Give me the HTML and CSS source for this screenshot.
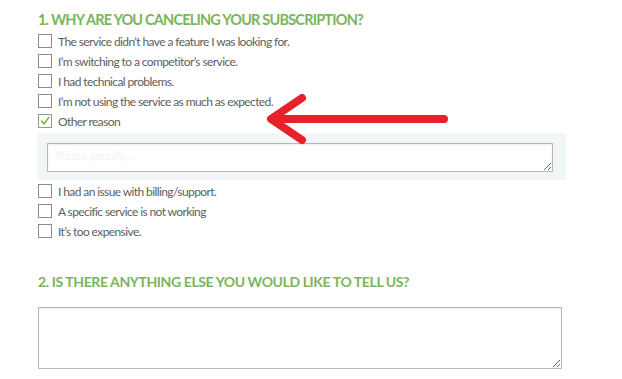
FILE: index.html
```html
<!DOCTYPE html>
<html lang="en">
<head>
    <meta charset="UTF-8">
    <meta name="viewport" content="width=device-width, initial-scale=1.0">
    <title>Cancel subscription</title>
    <link rel="stylesheet" href="styles.css">
</head>
<body>
    <div class="survey">
        <section class="question">
            <h2 class="question-title">1. Why are you canceling your subscription?</h2>
            <ul class="options">
                <li class="option"><span class="box"></span>The service didn’t have a feature I was looking for.</li>
                <li class="option"><span class="box"></span>I’m switching to a competitor’s service.</li>
                <li class="option"><span class="box"></span>I had technical problems.</li>
                <li class="option"><span class="box"></span>I’m not using the service as much as expected.</li>
                <li class="option">
                    <span class="box checked">
                        <svg viewBox="0 0 14 14" width="14" height="14"><path d="M3 7.2 L5.8 10.2 L11.5 2.8" fill="none" stroke="#6cb33f" stroke-width="1.8" stroke-linecap="round" stroke-linejoin="round"/></svg>
                    </span>Other reason
                </li>
            </ul>
            <div class="other-box">
                <textarea class="other-input" placeholder="Please specify..."></textarea>
            </div>
            <ul class="options">
                <li class="option"><span class="box"></span>I had an issue with billing/support.</li>
                <li class="option"><span class="box"></span>A specific service is not working</li>
                <li class="option"><span class="box"></span>It’s too expensive.</li>
            </ul>
        </section>

        <section class="question second">
            <h2 class="question-title small">2. Is there anything else you would like to tell us?</h2>
            <textarea class="comments"></textarea>
        </section>

        <!-- annotation arrow -->
        <svg class="arrow" viewBox="260 88 195 62" width="195" height="62">
            <path d="M272 119 L444 119 M302 98 L271 119 L302 140" fill="none" stroke="#e8202a" stroke-width="8" stroke-linecap="round" stroke-linejoin="round"/>
        </svg>
    </div>
</body>
</html>
```

FILE: styles.css
```css
body {
    margin: 0;
    background: #fff;
    font-family: Lato, 'Open Sans', sans-serif;
    color: #606060;
}

.survey {
    position: relative;
    width: 622px;
    height: 379px;
    padding: 11px 0 0 38px;
    box-sizing: border-box;
}

.question-title {
    margin: 0;
    font-size: 14.5px;
    line-height: 18px;
    font-weight: 700;
    letter-spacing: -0.8px;
    text-transform: uppercase;
    color: #7ab55c;
}

.question-title.small {
    font-size: 14px;
    line-height: 17px;
    letter-spacing: -0.4px;
}

.options {
    list-style: none;
    margin: 2px 0 0;
    padding: 0;
}

.option {
    display: flex;
    align-items: center;
    height: 20px;
    font-size: 12px;
    letter-spacing: -0.6px;
}

.box {
    width: 12px;
    height: 12px;
    border: 1px solid #8a8a8a;
    margin-right: 6px;
    flex-shrink: 0;
    display: flex;
    align-items: center;
    justify-content: center;
    background: #fff;
}

.box.checked {
    border-color: #8f9e86;
}

.box svg {
    display: block;
}

.other-box {
    width: 529px;
    height: 47px;
    margin: 2px 0 0 -1px;
    padding: 10px 0 0 10px;
    box-sizing: border-box;
    background: #f3f6f7;
}

.other-input {
    display: block;
    width: 506px;
    height: 29px;
    box-sizing: border-box;
    border: 1px solid #b5b5b5;
    box-shadow: inset 0 1px 2px rgba(0, 0, 0, 0.08);
    font-family: inherit;
    font-size: 11px;
    padding: 5px 8px;
    margin: 0;
}

.other-input::placeholder {
    color: #f2f2f2;
}

.other-box + .options {
    margin-top: 1px;
}

.question.second {
    margin-top: 32px;
}

.comments {
    display: block;
    width: 524px;
    height: 62px;
    margin: 17px 0 0;
    box-sizing: border-box;
    border: 1px solid #b8b8b8;
    box-shadow: inset 0 1px 2px rgba(0, 0, 0, 0.08);
}

.arrow {
    position: absolute;
    left: 260px;
    top: 88px;
}
```
